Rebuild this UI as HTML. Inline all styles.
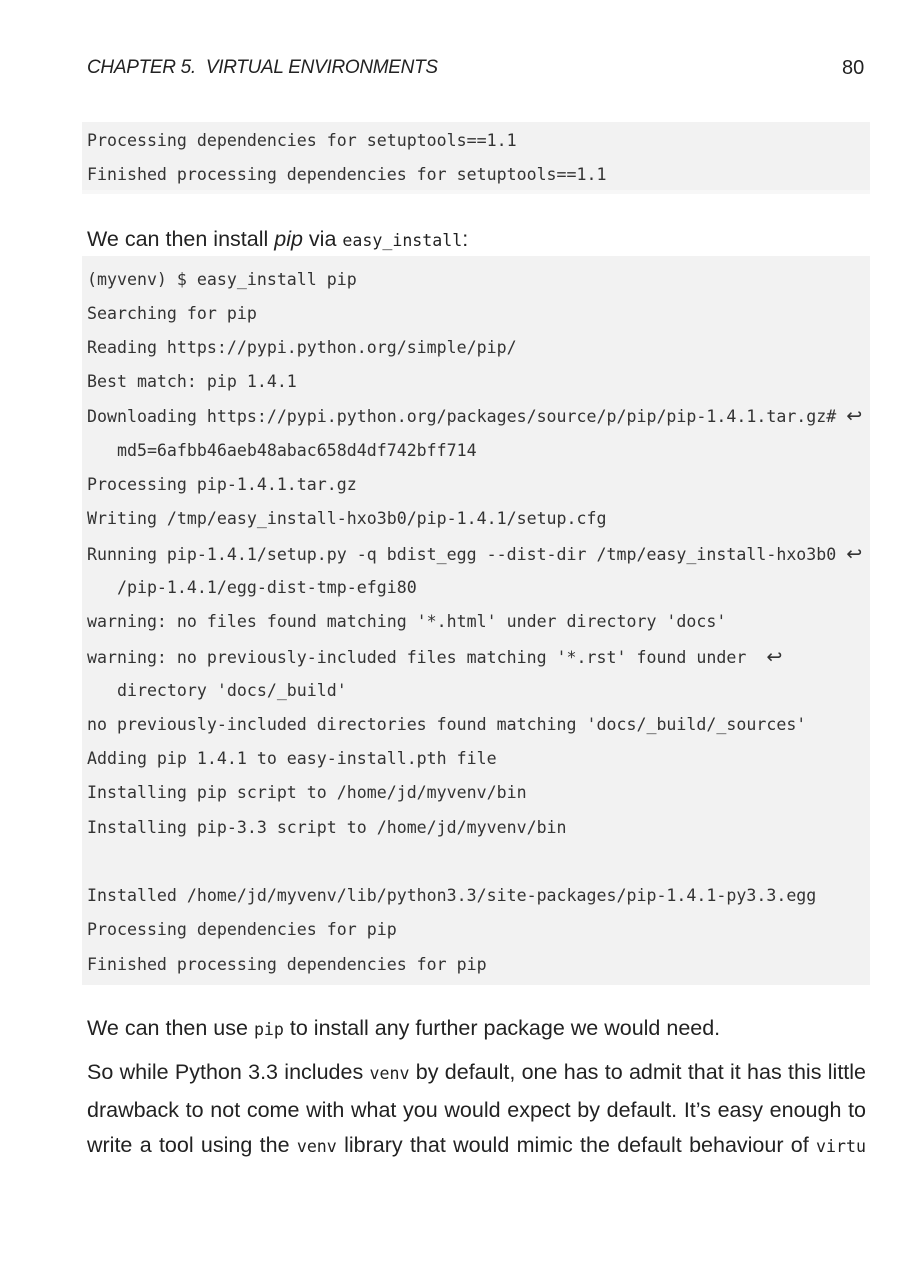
<!DOCTYPE html>
<html><head><meta charset="utf-8"><style>
body{margin:0;width:909px;height:1286px;background:#fff;position:relative;overflow:hidden;color:#222;}
.t{position:absolute;left:87px;white-space:pre;line-height:20px;}
.m{font-family:"DejaVu Sans Mono","Liberation Mono",monospace;font-size:16.6px;color:#333;}
.s{font-family:"Liberation Sans",sans-serif;font-size:21.5px;}
.j{width:779px;text-align:justify;text-align-last:justify;white-space:normal;}
.c{font-family:"DejaVu Sans Mono",monospace;font-size:16.6px;}
.bg{position:absolute;left:82px;width:788px;background:#f2f2f2;}
.a{font-family:"DejaVu Sans",sans-serif;font-size:19px;}
</style></head><body>
<div class="t s" style="top:58px;font-style:italic;font-size:19px;letter-spacing:-0.3px;">CHAPTER 5.  VIRTUAL ENVIRONMENTS</div>
<div class="t s" style="top:58px;left:842px;font-size:20px;">80</div>
<div class="bg" style="top:122px;height:68px;"></div>
<div class="bg" style="top:190px;height:4px;background:#f7f7f7"></div>
<div class="t m" style="top:131px;">Processing dependencies for setuptools==1.1</div>
<div class="t m" style="top:165px;">Finished processing dependencies for setuptools==1.1</div>
<div class="t s" style="top:229px;">We can then install <i>pip</i> via <span class="c">easy_install</span>:</div>
<div class="bg" style="top:256px;height:729px;"></div>
<div class="t m" style="top:270px;">(myvenv) $ easy_install pip</div>
<div class="t m" style="top:304px;">Searching for pip</div>
<div class="t m" style="top:338px;">Reading https://pypi.python.org/simple/pip/</div>
<div class="t m" style="top:372px;">Best match: pip 1.4.1</div>
<div class="t m" style="top:406px;">Downloading https://pypi.python.org/packages/source/p/pip/pip-1.4.1.tar.gz# <span class="a">↩</span></div>
<div class="t m" style="top:441px;">   md5=6afbb46aeb48abac658d4df742bff714</div>
<div class="t m" style="top:475px;">Processing pip-1.4.1.tar.gz</div>
<div class="t m" style="top:509px;">Writing /tmp/easy_install-hxo3b0/pip-1.4.1/setup.cfg</div>
<div class="t m" style="top:544px;">Running pip-1.4.1/setup.py -q bdist_egg --dist-dir /tmp/easy_install-hxo3b0 <span class="a">↩</span></div>
<div class="t m" style="top:578px;">   /pip-1.4.1/egg-dist-tmp-efgi80</div>
<div class="t m" style="top:612px;">warning: no files found matching '*.html' under directory 'docs'</div>
<div class="t m" style="top:647px;">warning: no previously-included files matching '*.rst' found under  <span class="a">↩</span></div>
<div class="t m" style="top:681px;">   directory 'docs/_build'</div>
<div class="t m" style="top:715px;">no previously-included directories found matching 'docs/_build/_sources'</div>
<div class="t m" style="top:749px;">Adding pip 1.4.1 to easy-install.pth file</div>
<div class="t m" style="top:783px;">Installing pip script to /home/jd/myvenv/bin</div>
<div class="t m" style="top:818px;">Installing pip-3.3 script to /home/jd/myvenv/bin</div>
<div class="t m" style="top:886px;">Installed /home/jd/myvenv/lib/python3.3/site-packages/pip-1.4.1-py3.3.egg</div>
<div class="t m" style="top:920px;">Processing dependencies for pip</div>
<div class="t m" style="top:955px;">Finished processing dependencies for pip</div>
<div class="t s" style="top:1018px;">We can then use <span class="c">pip</span> to install any further package we would need.</div>
<div class="t s j" style="top:1062px;">So while Python 3.3 includes <span class="c">venv</span> by default, one has to admit that it has this little</div>
<div class="t s j" style="top:1100px;">drawback to not come with what you would expect by default. It’s easy enough to</div>
<div class="t s j" style="top:1135px;">write a tool using the <span class="c">venv</span> library that would mimic the default behaviour of <span class="c">virtu</span></div>
</body></html>
